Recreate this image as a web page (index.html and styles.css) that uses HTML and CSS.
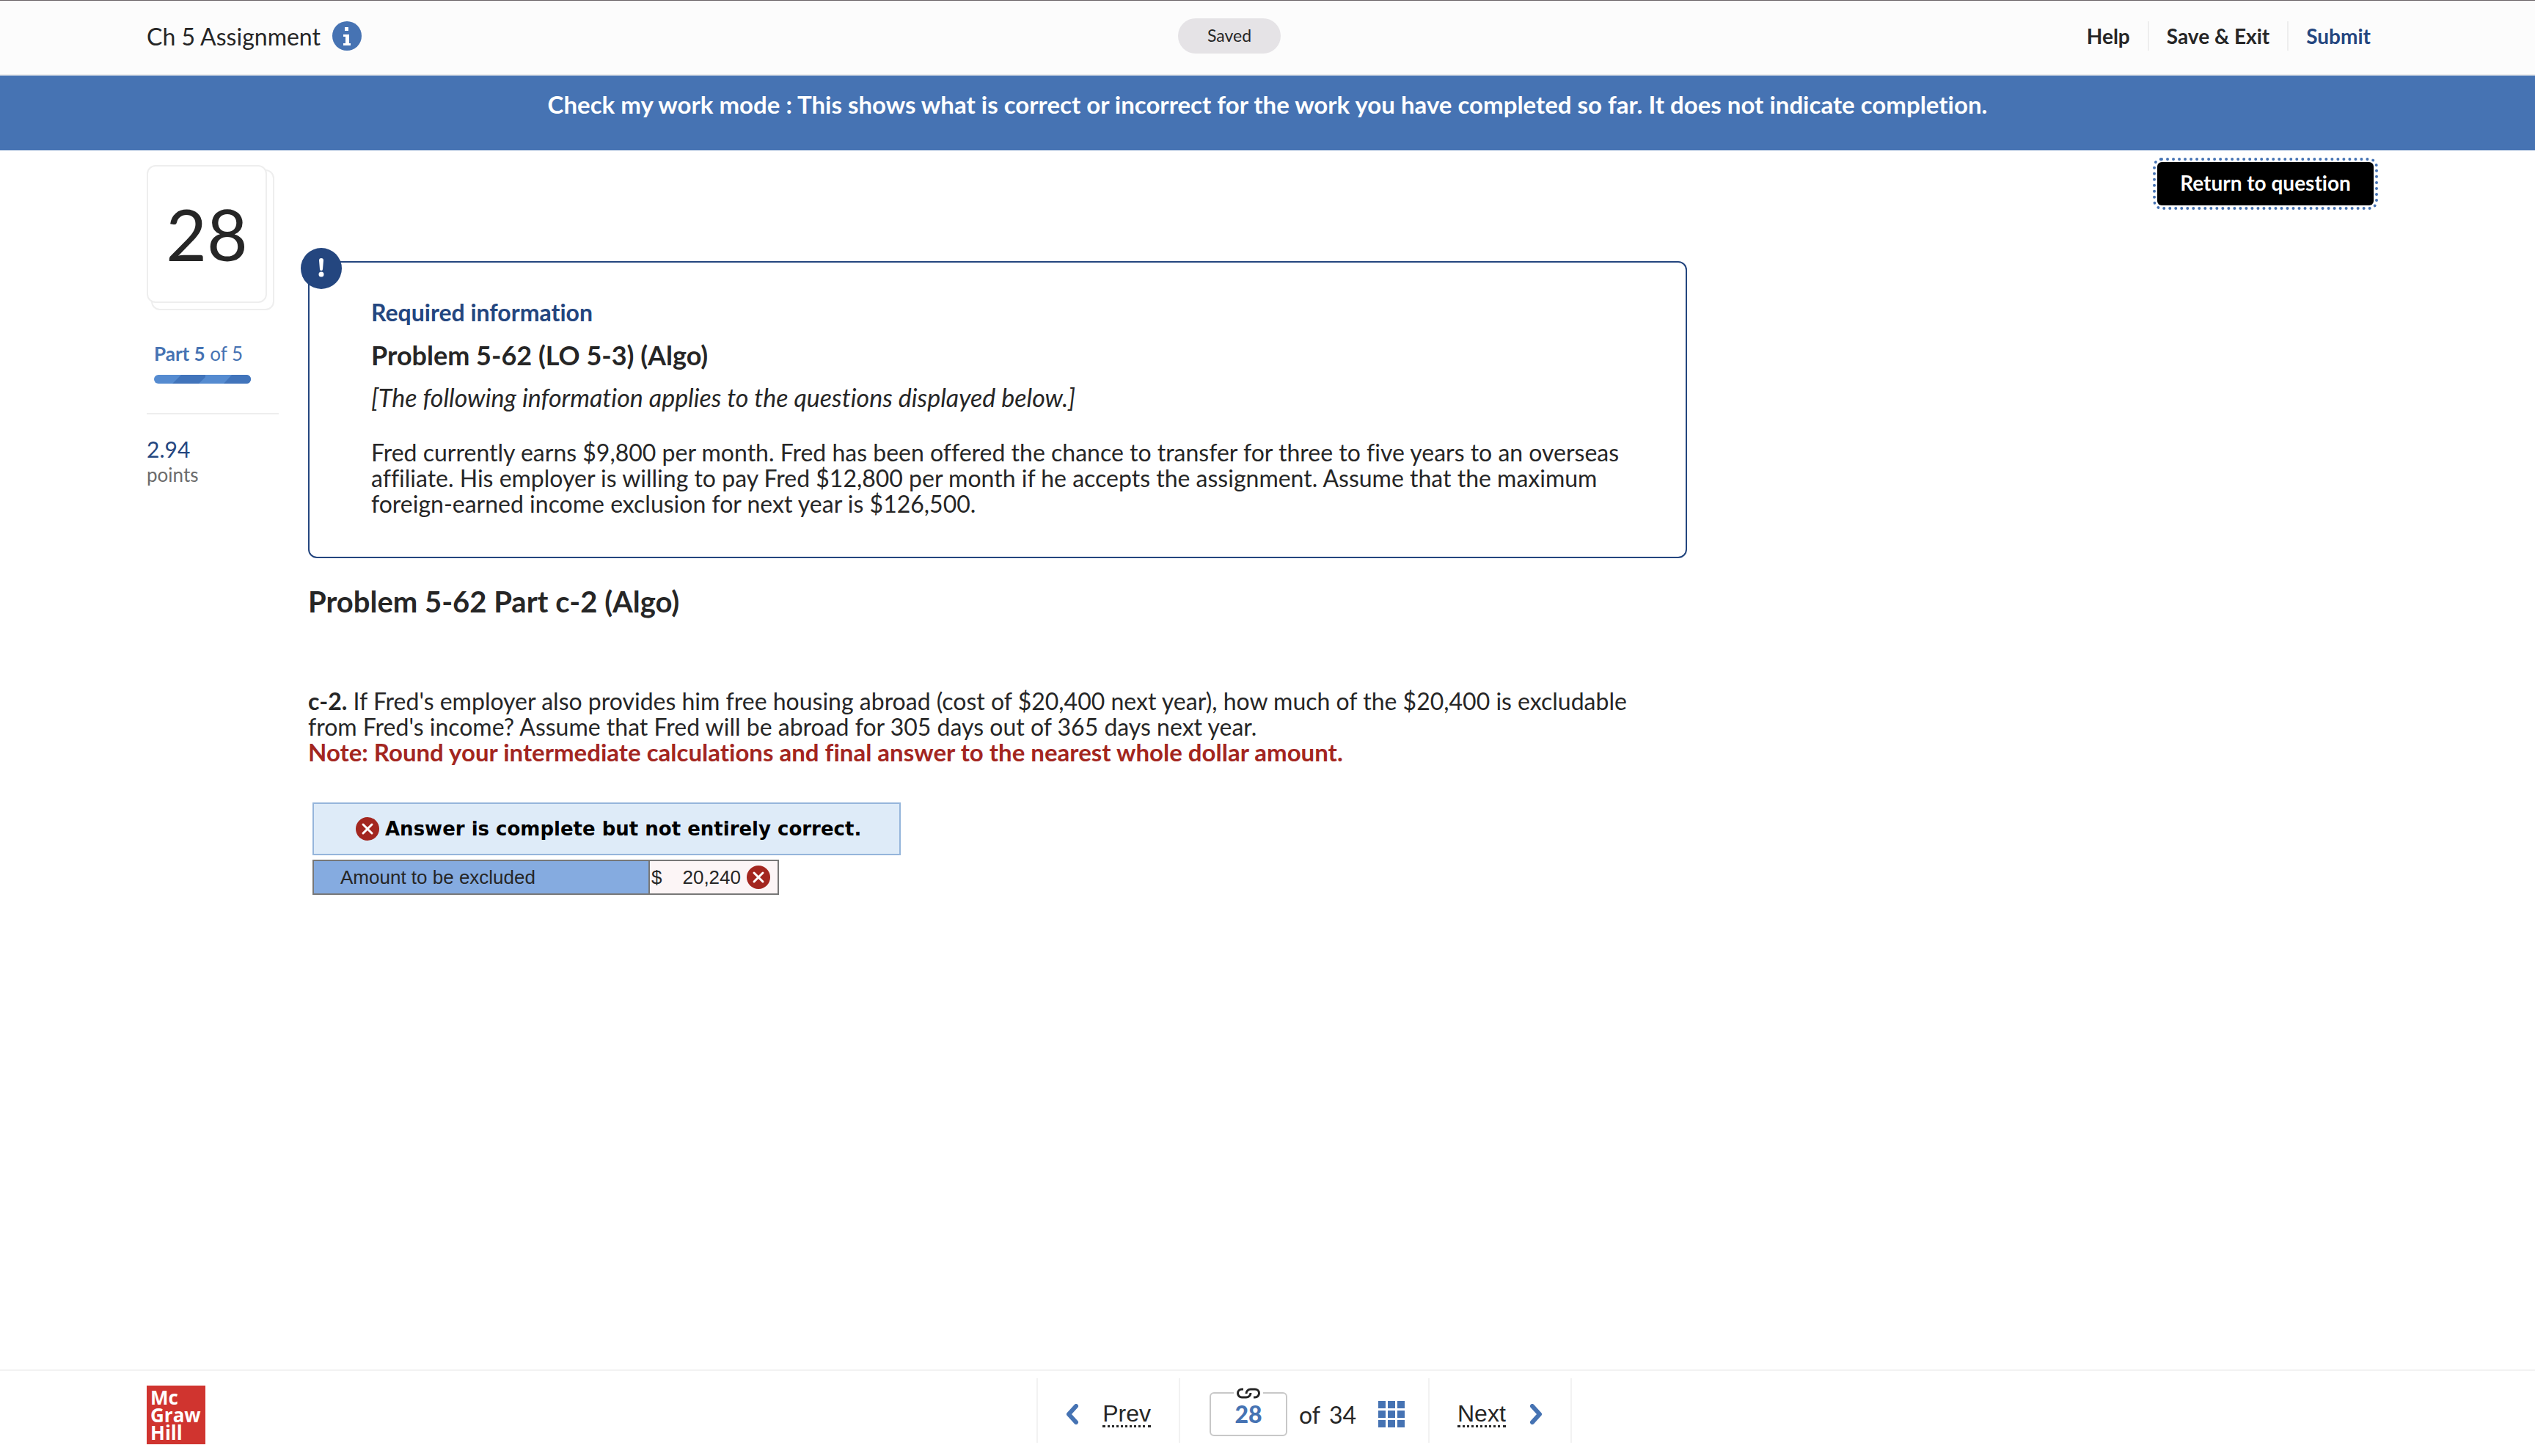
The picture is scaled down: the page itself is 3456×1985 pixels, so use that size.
FILE: index.html
```html
<!DOCTYPE html>
<html lang="en">
<head>
  <meta charset="UTF-8" />
  <meta name="viewport" content="width=device-width, initial-scale=1.0" />
  <title>Ch 5 Assignment</title>
  <link rel="stylesheet" href="styles.css">
</head>
<body>
  <header class="topbar">
    <div class="topbar-title">
      <h1>Ch 5 Assignment</h1>
      <button class="info" type="button" aria-label="Assignment information">
        <svg viewBox="0 0 40 40">
          <circle cx="20" cy="20" r="20" fill="#4673b3" />
          <path d="M17 8h5v5h-5zM15 18h8v12h2v3H15v-3h3v-9h-3z" fill="#fff" />
        </svg>
      </button>
    </div>
    <span class="saved">Saved</span>
    <nav class="topbar-links">
      <a href="#">Help</a>
      <a href="#">Save &amp; Exit</a>
      <a href="#" class="submit">Submit</a>
    </nav>
  </header>

  <div class="banner">Check my work mode : This shows what is correct or incorrect for the work you have completed so far. It does not indicate completion.</div>

  <main class="page">
    <aside class="sidebar">
      <div class="card-stack"><div class="card">28</div></div>
      <div class="part">
        <div><strong>Part 5</strong> of 5</div>
        <svg class="progress" viewBox="0 0 132 12">
          <rect width="132" height="12" fill="#558bd0" />
          <path d="M37 0h33v3l-9 9H25zM106 0h26v12H95z" fill="#4174bb" />
        </svg>
      </div>
      <div class="score">
        <div class="score-value">2.94</div>
        <div class="score-label">points</div>
      </div>
    </aside>

    <div class="question">
      <section class="required">
        <span class="badge">
          <svg viewBox="0 0 56 56">
            <circle cx="28" cy="28" r="28" fill="#24467f" />
            <path d="M25 17a3 3 0 0 1 6 0l-1 12a2 2 0 0 1-4 0z" fill="#fff" />
            <circle cx="28" cy="36" r="3.5" fill="#fff" />
          </svg>
        </span>
        <h2>Required information</h2>
        <h3>Problem 5-62 (LO 5-3) (Algo)</h3>
        <p class="applies">[The following information applies to the questions displayed below.]</p>
        <p>Fred currently earns $9,800 per month. Fred has been offered the chance to transfer for three to five years to an overseas<br>
        affiliate. His employer is willing to pay Fred $12,800 per month if he accepts the assignment. Assume that the maximum<br>
        foreign-earned income exclusion for next year is $126,500.</p>
      </section>

      <h2 class="part-title">Problem 5-62 Part c-2 (Algo)</h2>

      <p class="prompt"><strong>c-2.</strong> If Fred's employer also provides him free housing abroad (cost of $20,400 next year), how much of the $20,400 is excludable<br>
      from Fred's income? Assume that Fred will be abroad for 305 days out of 365 days next year.<br>
      <strong class="note">Note: Round your intermediate calculations and final answer to the nearest whole dollar amount.</strong></p>

      <div class="result">
        <svg class="wrong" viewBox="0 0 32 32">
          <circle cx="16" cy="16" r="16" fill="#a3261f" />
          <path d="M10 10l12 12M22 10L10 22" stroke="#fff" stroke-width="3" stroke-linecap="round" />
        </svg>
        Answer is complete but not entirely correct.
      </div>
      <table class="answer">
        <tr>
          <th scope="row">Amount to be excluded</th>
          <td>
            <div class="amount">
              <span>$</span>
              <span class="amount-value">20,240</span>
              <svg class="wrong" viewBox="0 0 32 32">
                <circle cx="16" cy="16" r="16" fill="#a3261f" />
                <path d="M10 10l12 12M22 10L10 22" stroke="#fff" stroke-width="3" stroke-linecap="round" />
              </svg>
            </div>
          </td>
        </tr>
      </table>
    </div>

    <button class="return" type="button">Return to question</button>
  </main>

  <footer class="footer">
    <div class="logo">Mc<br>Graw<br>Hill</div>
    <nav class="pager">
      <a href="#" class="pager-step">
        <svg class="chevron" viewBox="0 0 18 28"><path d="M14 3L4 14l10 11" /></svg>
        <span>Prev</span>
      </a>
      <div class="pager-current">
        <div class="page-box">
          <input type="text" value="28" aria-label="Question number">
          <svg class="link-icon" viewBox="0 0 40 16">
            <path d="M13 2h-2a5.500 5.500 0 0 0 0 11h6a6 6 0 0 0 6-6M27 13h2a5.500 5.500 0 0 0 0-11h-6a6 6 0 0 0-6 6" />
          </svg>
        </div>
        <span>of</span>
        <span class="total">34</span>
        <button class="grid" type="button" aria-label="Question map">
          <svg viewBox="0 0 36 36">
            <path d="M0 0h10v10H0zM13 0h10v10H13zM26 0h10v10H26zM0 13h10v10H0zM13 13h10v10H13zM26 13h10v10H26zM0 26h10v10H0zM13 26h10v10H13zM26 26h10v10H26z" fill="#4673b3" />
          </svg>
        </button>
      </div>
      <a href="#" class="pager-step">
        <span>Next</span>
        <svg class="chevron" viewBox="0 0 18 28"><path d="M4 3l10 11L4 25" /></svg>
      </a>
    </nav>
  </footer>
</body>
</html>
```
FILE: styles.css
```css
* {
  box-sizing: border-box;
}
body {
  margin: 0;
  min-height: 100vh;
  display: flex;
  flex-direction: column;
  font-family: Lato, "Liberation Sans", sans-serif;
  font-size: 32px;
  font-variant-ligatures: none;
  line-height: 35px;
  color: #262626;
  background: #fff;
}
h1, h2, h3, p {
  margin: 0;
}
a {
  color: inherit;
  text-decoration: none;
}
button {
  padding: 0;
  border: none;
  background: none;
  font: inherit;
  font-variant-ligatures: none;
  cursor: pointer;
}
svg {
  display: block;
}

/* top bar */
.topbar {
  height: 103px;
  padding: 0 200px 4px;
  display: flex;
  align-items: center;
  justify-content: space-between;
  background: #fcfcfc;
  border-top: 1px solid #6b6467;
  border-bottom: 2px solid #eee;
  position: relative;
}
.topbar-title {
  display: flex;
  align-items: center;
  gap: 16px;
}
.topbar-title h1 {
  font-size: 32px;
  font-weight: 400;
}
.info svg {
  width: 40px;
  height: 40px;
}
.saved {
  position: absolute;
  left: calc(50% - 122px);
  width: 140px;
  height: 48px;
  line-height: 46px;
  border-radius: 24px;
  background: #e5e3e6;
  font-size: 23px;
  text-align: center;
}
.topbar-links {
  display: flex;
  align-items: center;
  font-size: 28px;
  font-weight: 700;
}
.topbar-links a {
  padding: 0 24px;
  line-height: 40px;
  border-left: 2px solid #eee;
}
.topbar-links a:first-child {
  border-left: none;
}
.topbar-links .submit {
  color: #24467f;
}

.banner {
  height: 102px;
  padding-top: 22px;
  background: #4673b3;
  color: #fff;
  font-size: 33px;
  font-weight: 700;
  text-align: center;
}

/* question area */
.page {
  flex: 1;
  padding: 16px 220px 40px 200px;
  display: flex;
  align-items: flex-start;
}
.sidebar {
  width: 180px;
  margin-right: 40px;
  padding-top: 4px;
}
.card-stack {
  position: relative;
  width: 174px;
  height: 198px;
}
.card-stack::before {
  content: "";
  position: absolute;
  inset: 6px 0 0 6px;
  border: 2px solid #eee;
  border-radius: 12px;
}
.card {
  position: relative;
  width: 164px;
  height: 188px;
  border: 2px solid #eee;
  border-radius: 12px;
  background: #fff;
  font-size: 96px;
  line-height: 184px;
  text-align: center;
}
.part {
  padding: 42px 10px 40px;
  color: #4673b3;
  font-size: 26px;
  border-bottom: 2px solid #eee;
}
.progress {
  width: 132px;
  height: 12px;
  margin-top: 11px;
  border-radius: 6px;
}
.score {
  padding-top: 30px;
}
.score-value {
  color: #24467f;
  font-size: 30px;
}
.score-label {
  color: #6b6b6b;
  font-size: 26px;
}
.question {
  width: 1880px;
  padding-top: 135px;
}
.required {
  position: relative;
  padding: 50px 84px 55px;
  border: 2px solid #24467f;
  border-radius: 12px;
}
.badge {
  position: absolute;
  top: -20px;
  left: -12px;
}
.badge svg {
  width: 56px;
  height: 56px;
}
.required h2 {
  color: #24467f;
  font-size: 32px;
}
.required h3 {
  margin: 24px 0 22px;
  font-size: 36px;
}
.applies {
  margin-bottom: 40px;
  font-size: 34px;
  font-style: italic;
}
.part-title {
  margin: 42px 0 100px;
  font-size: 40px;
}
.note {
  color: #a3261f;
  font-size: 33px;
}
.result {
  display: flex;
  align-items: center;
  gap: 8px;
  width: 802px;
  height: 72px;
  margin: 51px 0 6px 6px;
  padding-left: 57px;
  border: 2px solid #95b5db;
  background: #deebf8;
  color: #000;
  font: bold 26px "DejaVu Sans", sans-serif;
}
.wrong {
  width: 32px;
  height: 32px;
}
.answer {
  margin-left: 6px;
  border-collapse: collapse;
  font: 26px "Liberation Sans", sans-serif;
}
.answer th,
.answer td {
  height: 46px;
  padding: 0;
  border: 2px solid #777;
}
.answer th {
  width: 458px;
  padding-left: 36px;
  background: #85abe0;
  font-weight: 400;
  text-align: left;
}
.answer td {
  width: 176px;
  background: #fcf5f6;
}
.amount {
  display: flex;
  align-items: center;
  padding: 0 10px 0 2px;
}
.amount-value {
  margin-left: auto;
  margin-right: 8px;
}
.return {
  margin-left: auto;
  width: 295px;
  height: 59px;
  padding-bottom: 2px;
  border-radius: 6px;
  background: #000;
  color: #fff;
  font-size: 28px;
  font-weight: 700;
  outline: 4px dotted #4673b3;
  outline-offset: 2px;
}

/* footer */
.footer {
  height: 118px;
  padding: 10px 200px 0;
  display: grid;
  grid-template-columns: 1fr auto 1fr;
  border-top: 2px solid #f2f2f2;
}
.logo {
  width: 80px;
  height: 80px;
  margin-top: 10px;
  padding: 4px 5px;
  background: #d0342f;
  color: #fff;
  font: bold 26px/24px "Open Sans", sans-serif;
}
.pager {
  display: flex;
  height: 88px;
  margin-left: 100px;
}
.pager-step,
.pager-current {
  display: flex;
  align-items: center;
  padding-top: 10px;
  border-left: 2px solid #f2f2f2;
}
.pager-step {
  width: 194px;
  padding-left: 38px;
  padding-right: 38px;
  justify-content: space-between;
  font-family: "Liberation Sans", sans-serif;
}
.pager-step:last-child {
  width: 196px;
  border-right: 2px solid #f2f2f2;
}
.pager-step span {
  border-bottom: 3px dotted #262626;
  line-height: 32px;
}
.chevron {
  width: 18px;
  height: 28px;
  fill: none;
  stroke: #4673b3;
  stroke-width: 6;
  stroke-linecap: round;
  stroke-linejoin: round;
}
.pager-current {
  width: 340px;
  padding-left: 40px;
}
.page-box {
  position: relative;
  margin-right: 16px;
}
.page-box input {
  display: block;
  width: 106px;
  height: 60px;
  padding: 0 0 2px;
  border: 2px solid #c8c8c8;
  border-radius: 6px;
  background: #fff;
  color: #4673b3;
  font: 900 32px Lato, sans-serif;
  text-align: center;
}
.link-icon {
  position: absolute;
  top: -6px;
  left: 33px;
  width: 40px;
  height: 16px;
  background: #fff;
  fill: none;
  stroke: #262626;
  stroke-width: 3;
}
.total {
  margin: 0 30px 0 12px;
}
.grid svg {
  width: 36px;
  height: 36px;
}
```
